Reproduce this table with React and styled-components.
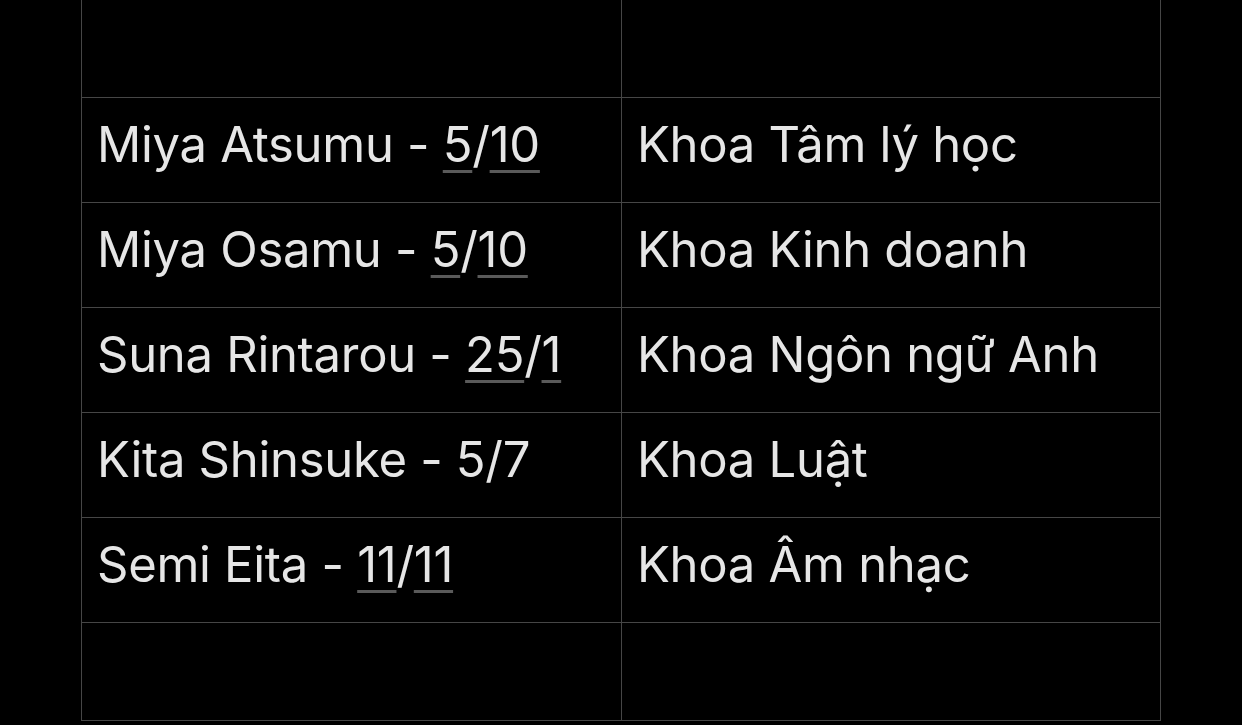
import React from "react";
import styled, { createGlobalStyle } from "styled-components";

const Global = createGlobalStyle`
  html, body { margin: 0; padding: 0; background: #000; }
  body { font-family: Inter, "Noto Sans", "DejaVu Sans", sans-serif; overflow: hidden; }
`;

const Page = styled.div`
  width: 1242px;
  height: 725px;
  background: #000;
  padding-left: 81px;
  box-sizing: border-box;
`;

const Table = styled.div`
  display: grid;
  grid-template-columns: 539px 538px;
  grid-template-rows: 97px repeat(5, 104px) 97px;
  gap: 1px;
  width: fit-content;
  background: #464646;
  padding: 0 1px 1px 1px;
`;

const Cell = styled.div`
  background: #000;
  display: flex;
  align-items: center;
  padding-left: 15px;
  padding-bottom: 11px;
  box-sizing: border-box;
  color: #e6e6e6;
  font-size: 49px;
  font-weight: 370;
  letter-spacing: -0.3px;
  white-space: pre;
`;

const Text = styled.span``;

const Date = styled.span`
  text-decoration: underline;
  text-decoration-color: #5a5a5a;
  text-decoration-thickness: 2.5px;
  text-underline-offset: 8px;
`;

const rows = [
  { name: "Miya Atsumu - ", date: ["5", "10"], dept: "Khoa Tâm lý học" },
  { name: "Miya Osamu - ", date: ["5", "10"], dept: "Khoa Kinh doanh" },
  { name: "Suna Rintarou - ", date: ["25", "1"], dept: "Khoa Ngôn ngữ Anh" },
  { name: "Kita Shinsuke - 5/7", date: null, dept: "Khoa Luật" },
  { name: "Semi Eita - ", date: ["11", "11"], dept: "Khoa Âm nhạc" },
];

export default function App() {
  return (
    <Page>
      <Global />
      <Table>
        <Cell />
        <Cell />
        {rows.map((r, i) => (
          <React.Fragment key={i}>
            <Cell>
              <Text>
                {r.name}
                {r.date && (
                  <>
                    <Date>{r.date[0]}</Date>/<Date>{r.date[1]}</Date>
                  </>
                )}
              </Text>
            </Cell>
            <Cell>
              <Text>{r.dept}</Text>
            </Cell>
          </React.Fragment>
        ))}
        <Cell />
        <Cell />
      </Table>
    </Page>
  );
}
